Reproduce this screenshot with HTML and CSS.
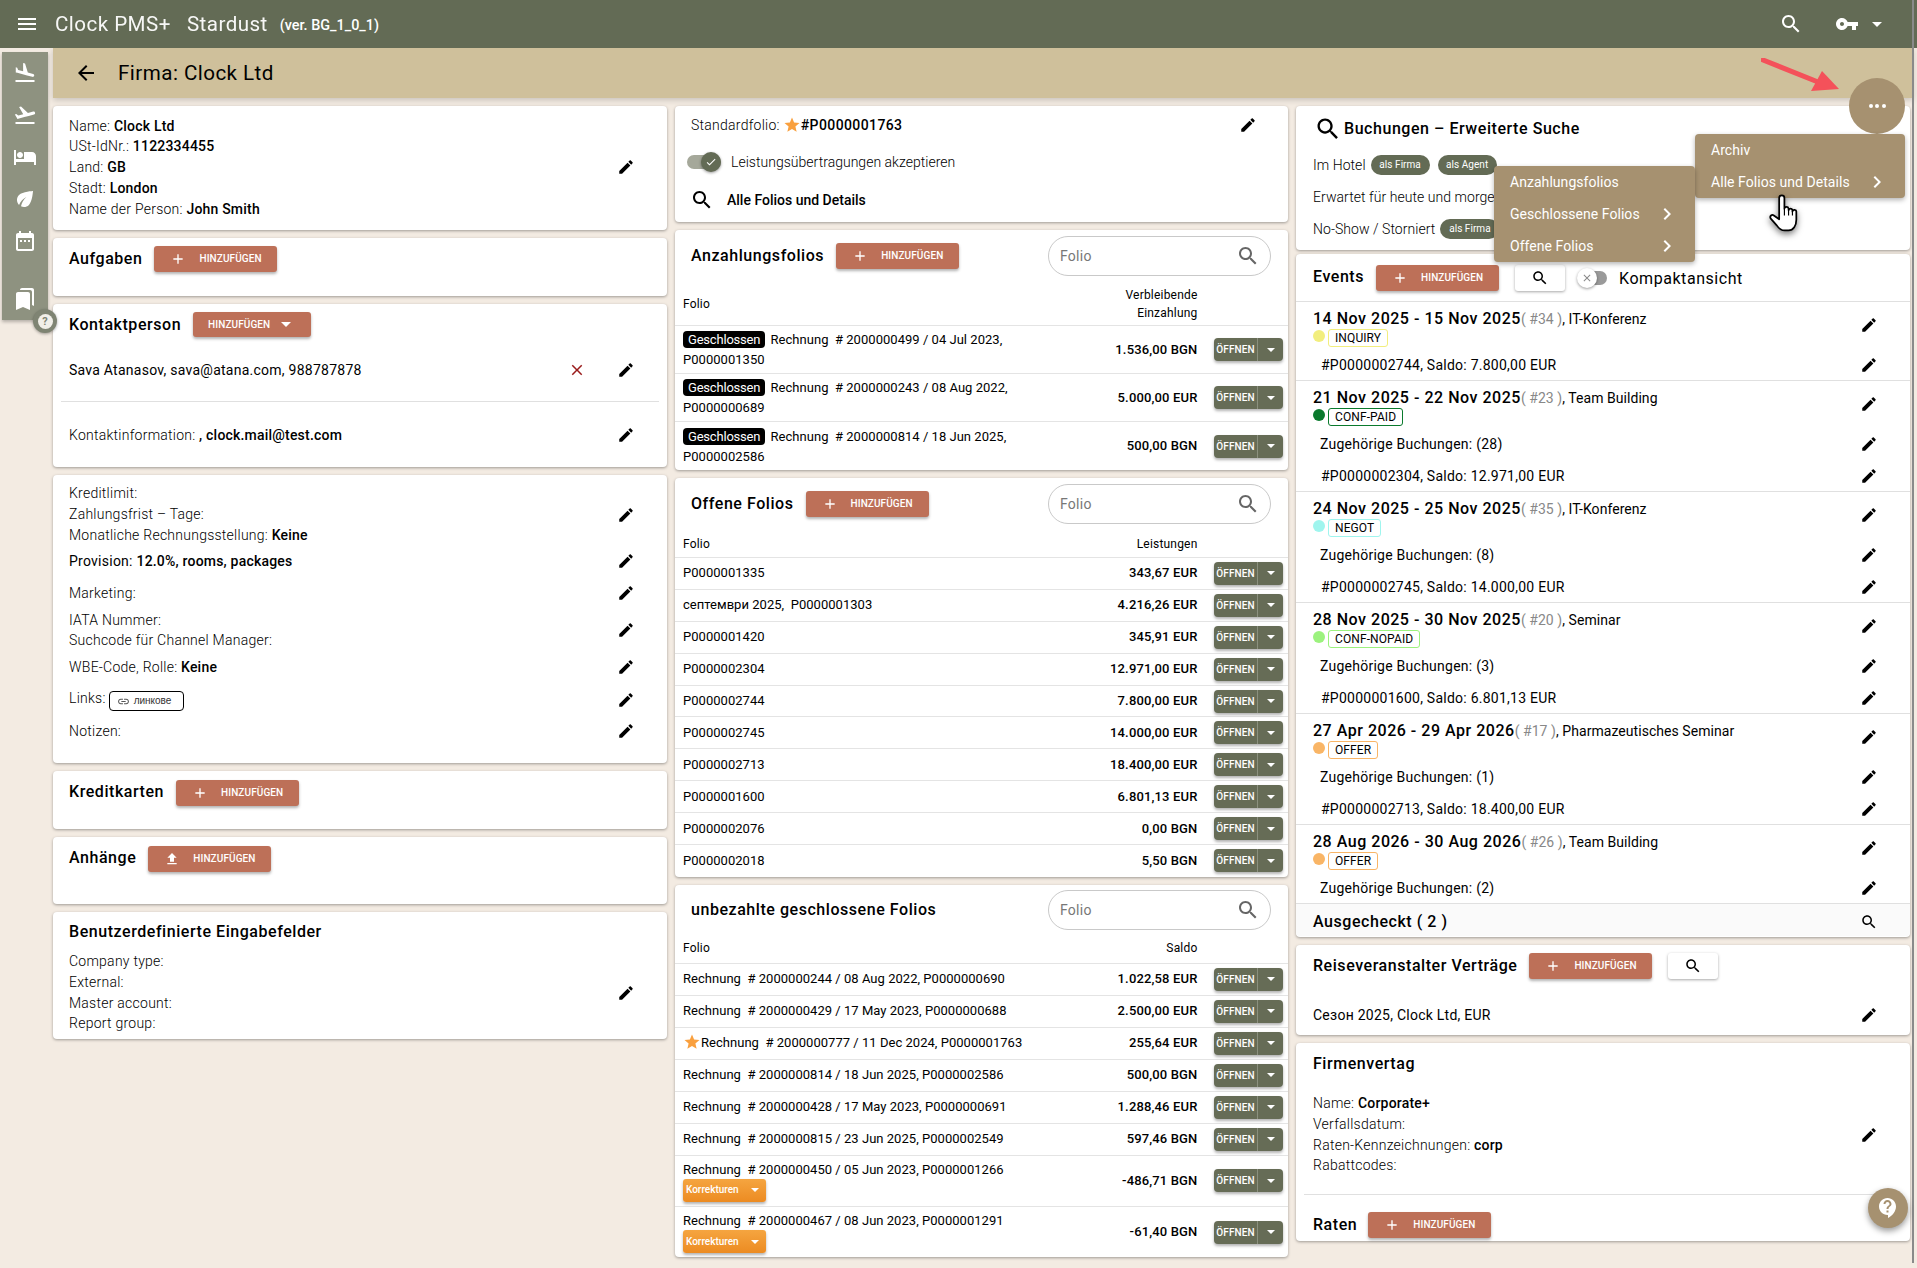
FILE: index.html
```html
<!DOCTYPE html>
<html lang="de">
<head>
<meta charset="utf-8">
<title>Firma: Clock Ltd</title>
<link rel="stylesheet" href="styles.css">
</head>
<body>
<svg class="defs" aria-hidden="true">
<symbol id="i-land" viewBox="0 0 24 24"><path d="M2.5 19h19v2h-19zm7.18-5.73l4.35 1.16 5.31 1.42c.8.21 1.62-.26 1.84-1.06.21-.8-.26-1.62-1.06-1.84l-5.31-1.42-2.76-9.02L10.12 2v8.28L5.15 8.95l-.93-2.32-1.45-.39v5.17l1.6.43 5.31 1.43z"/></symbol>
<symbol id="i-off" viewBox="0 0 24 24"><path d="M2.5 19h19v2h-19zm19.57-9.36c-.21-.8-1.04-1.28-1.84-1.06L14.92 10l-6.9-6.43-1.93.51 4.14 7.17-4.97 1.33-1.97-1.54-1.45.39 1.82 3.16.77 1.33 1.6-.43 5.31-1.42 4.35-1.16L21 11.49c.81-.23 1.28-1.05 1.07-1.85z"/></symbol>
<symbol id="i-hotel" viewBox="0 0 24 24"><path d="M7 13c1.66 0 3-1.34 3-3S8.66 7 7 7s-3 1.34-3 3 1.34 3 3 3zm12-6h-8v7H3V5H1v15h2v-3h18v3h2v-9c0-2.21-1.79-4-4-4z"/></symbol>
<symbol id="i-eco" viewBox="0 0 24 24"><path d="M6.05 8.05c-2.73 2.73-2.73 7.15-.02 9.88 1.47-3.4 4.09-6.24 7.36-7.93-2.77 2.34-4.71 5.61-5.39 9.32 2.6 1.23 5.8.78 7.95-1.37C19.43 14.47 20 4 20 4S9.53 4.57 6.05 8.05z"/></symbol>
<symbol id="i-cal" viewBox="0 0 24 24"><path d="M19 4h-1V2h-2v2H8V2H6v2H5c-1.1 0-2 .9-2 2v14c0 1.1.9 2 2 2h14c1.1 0 2-.9 2-2V6c0-1.1-.9-2-2-2zm0 16H5V9h14v11zM7 11h2v2H7zm4 0h2v2h-2zm4 0h2v2h-2z"/></symbol>
<symbol id="i-books" viewBox="0 0 24 24"><path d="M19 18l2 1V3c0-1.1-.9-2-2-2H8.99C7.89 1 7 1.9 7 3h10c1.1 0 2 .9 2 2v13zM15 5H5c-1.1 0-2 .9-2 2v16l7-3 7 3V7c0-1.1-.9-2-2-2z"/></symbol>
<symbol id="i-search" viewBox="0 0 24 24"><path d="M15.5 14h-.79l-.28-.27C15.41 12.59 16 11.11 16 9.5 16 5.91 13.09 3 9.5 3S3 5.91 3 9.5 5.91 16 9.5 16c1.61 0 3.09-.59 4.23-1.57l.27.28v.79l5 4.99L20.49 19l-4.99-5zm-6 0C7.01 14 5 11.99 5 9.5S7.01 5 9.5 5 14 7.01 14 9.5 11.99 14 9.5 14z"/></symbol>
<symbol id="i-key" viewBox="0 0 24 24"><path d="M12.65 10C11.83 7.67 9.61 6 7 6c-3.31 0-6 2.69-6 6s2.69 6 6 6c2.61 0 4.83-1.67 5.65-4H17v4h4v-4h2v-4H12.65zM7 14c-1.1 0-2-.9-2-2s.9-2 2-2 2 .9 2 2-.9 2-2 2z"/></symbol>
<symbol id="i-add" viewBox="0 0 24 24"><path d="M19 13h-6v6h-2v-6H5v-2h6V5h2v6h6v2z"/></symbol>
<symbol id="i-up" viewBox="0 0 24 24"><path d="M9 16h6v-6h4l-7-7-7 7h4zm-4 2h14v2H5z"/></symbol>
<symbol id="i-back" viewBox="0 0 24 24"><path d="M20 11H7.83l5.59-5.59L12 4l-8 8 8 8 1.41-1.41L7.83 13H20v-2z"/></symbol>
<symbol id="i-menu" viewBox="0 0 24 24"><path d="M3 18h18v-2H3v2zm0-5h18v-2H3v2zm0-7v2h18V6H3z"/></symbol>
<symbol id="i-close" viewBox="0 0 24 24"><path d="M19 6.41L17.59 5 12 10.59 6.41 5 5 6.41 10.59 12 5 17.59 6.41 19 12 13.41 17.59 19 19 17.59 13.41 12z"/></symbol>
<symbol id="i-chev" viewBox="0 0 24 24"><path d="M10 6L8.59 7.41 13.17 12l-4.58 4.59L10 18l6-6z"/></symbol>
<symbol id="i-star" viewBox="0 0 24 24"><path d="M12 17.27L18.18 21l-1.64-7.03L22 9.24l-7.19-.61L12 2 9.19 8.63 2 9.24l5.46 4.73L5.82 21z"/></symbol>
<symbol id="i-link" viewBox="0 0 24 24"><path d="M3.9 12c0-1.71 1.39-3.1 3.1-3.1h4V7H7c-2.76 0-5 2.24-5 5s2.24 5 5 5h4v-1.9H7c-1.71 0-3.1-1.39-3.1-3.1zM8 13h8v-2H8v2zm9-6h-4v1.9h4c1.71 0 3.1 1.39 3.1 3.1s-1.39 3.1-3.1 3.1h-4V17h4c2.76 0 5-2.24 5-5s-2.24-5-5-5z"/></symbol>
<symbol id="i-support" viewBox="0 0 24 24"><path d="M11.5 2C6.81 2 3 5.81 3 10.5S6.81 19 11.5 19h.5v3c4.86-2.34 8-7 8-11.5C20 5.81 16.19 2 11.5 2zm1 14.5h-2v-2h2v2zm0-3.5h-2c0-3.25 3-3 3-5 0-1.1-.9-2-2-2s-2 .9-2 2h-2c0-2.21 1.79-4 4-4s4 1.79 4 4c0 2.5-3 2.75-3 5z"/></symbol>
<symbol id="i-edit" viewBox="0 0 24 24"><path d="M3 17.25V21h3.75L17.81 9.94l-3.75-3.75L3 17.25zM20.71 7.04c.39-.39.39-1.02 0-1.41l-2.34-2.34c-.39-.39-1.02-.39-1.41 0l-1.83 1.83 3.75 3.75 1.83-1.83z"/></symbol>
<symbol id="i-check" viewBox="0 0 24 24"><path d="M9 16.17L4.83 12l-1.42 1.41L9 19 21 7l-1.41-1.41z"/></symbol>
</svg>

<header class="topbar">
  <svg class="ico ico-24 topbar-menu"><use href="#i-menu"/></svg>
  <span class="brand">Clock PMS+</span>
  <span class="brand brand-2">Stardust</span>
  <span class="version">(ver. BG_1_0_1)</span>
  <span class="spacer"></span>
  <svg class="ico ico-24 topbar-search"><use href="#i-search"/></svg>
  <svg class="ico ico-24 topbar-key"><use href="#i-key"/></svg>
  <span class="caret caret-white topbar-caret"></span>
</header>

<nav class="sidebar">
  <svg class="ico side-ico"><use href="#i-land"/></svg>
  <svg class="ico side-ico"><use href="#i-off"/></svg>
  <svg class="ico side-ico"><use href="#i-hotel"/></svg>
  <svg class="ico side-ico"><use href="#i-eco"/></svg>
  <svg class="ico side-ico"><use href="#i-cal"/></svg>
  <span class="side-sep"></span>
  <svg class="ico side-ico side-books"><use href="#i-books"/></svg>
  <span class="side-help"><span class="side-help-in">?</span></span>
</nav>

<div class="subbar">
  <svg class="ico ico-24 subbar-back"><use href="#i-back"/></svg>
  <h1 class="subbar-title">Firma: Clock Ltd</h1>
</div>

<main class="grid">
  <section class="col">
    <div class="card card-info">
      <div class="line-row">
        <div class="lines">
          <div>Name: <b>Clock Ltd</b></div>
          <div>USt-IdNr.: <b>1122334455</b></div>
          <div>Land: <b>GB</b></div>
          <div>Stadt: <b>London</b></div>
          <div>Name der Person: <b>John Smith</b></div>
        </div>
        <svg class="ico edit"><use href="#i-edit"/></svg>
      </div>
    </div>

    <div class="card card-aufgaben">
      <div class="title-row"><h2 class="title">Aufgaben</h2>
        <span class="btn"><svg class="ico btn-ico"><use href="#i-add"/></svg>Hinzufügen</span></div>
    </div>

    <div class="card card-kontakt">
      <div class="title-row"><h2 class="title">Kontaktperson</h2>
        <span class="btn btn-menu">Hinzufügen<span class="caret caret-white"></span></span></div>
      <div class="kontakt-row"><span class="strong-text">Sava Atanasov, sava@atana.com, 988787878</span><span class="spacer"></span>
        <svg class="ico del"><use href="#i-close"/></svg><svg class="ico edit"><use href="#i-edit"/></svg></div>
      <hr class="rule rule-inset">
      <div class="kontakt-row kontakt-row-2"><span>Kontaktinformation: <b>, clock.mail@test.com</b></span><span class="spacer"></span><svg class="ico edit"><use href="#i-edit"/></svg></div>
    </div>

    <div class="card card-kredit">
      <div class="line-row lr-3"><div class="lines"><div>Kreditlimit:</div><div>Zahlungsfrist – Tage:</div><div>Monatliche Rechnungsstellung: <b>Keine</b></div></div><svg class="ico edit"><use href="#i-edit"/></svg></div>
      <div class="line-row lr-prov"><div>Provision: <b>12.0%, rooms, packages</b></div><svg class="ico edit"><use href="#i-edit"/></svg></div>
      <div class="line-row lr-mark"><div>Marketing:</div><svg class="ico edit"><use href="#i-edit"/></svg></div>
      <div class="line-row lr-iata"><div class="lines"><div>IATA Nummer:</div><div>Suchcode für Channel Manager:</div></div><svg class="ico edit"><use href="#i-edit"/></svg></div>
      <div class="line-row lr-wbe"><div>WBE-Code, Rolle: <b>Keine</b></div><svg class="ico edit"><use href="#i-edit"/></svg></div>
      <div class="line-row lr-links"><div class="links">Links: <span class="link-chip"><svg class="ico link-ico"><use href="#i-link"/></svg>линкове</span></div><svg class="ico edit"><use href="#i-edit"/></svg></div>
      <div class="line-row lr-notes"><div>Notizen:</div><svg class="ico edit"><use href="#i-edit"/></svg></div>
    </div>

    <div class="card card-karten">
      <div class="title-row"><h2 class="title">Kreditkarten</h2>
        <span class="btn"><svg class="ico btn-ico"><use href="#i-add"/></svg>Hinzufügen</span></div>
    </div>

    <div class="card card-anhang">
      <div class="title-row"><h2 class="title">Anhänge</h2>
        <span class="btn"><svg class="ico btn-ico"><use href="#i-up"/></svg>Hinzufügen</span></div>
    </div>

    <div class="card card-custom">
      <h2 class="title custom-title">Benutzerdefinierte Eingabefelder</h2>
      <div class="line-row"><div class="lines"><div>Company type:</div><div>External:</div><div>Master account:</div><div>Report group:</div></div><svg class="ico edit"><use href="#i-edit"/></svg></div>
    </div>
  </section>

  <section class="col">
    <div class="card card-std">
      <div class="std-row"><span>Standardfolio: <svg class="ico star"><use href="#i-star"/></svg><b class="std-no">#P0000001763</b></span><span class="spacer"></span><svg class="ico edit"><use href="#i-edit"/></svg></div>
      <div class="toggle-row"><span class="toggle toggle-on"><span class="knob knob-on"><svg class="ico knob-ico"><use href="#i-check"/></svg></span></span><span>Leistungsübertragungen akzeptieren</span></div>
      <div class="alle-row"><svg class="ico ico-24"><use href="#i-search"/></svg><span>Alle Folios und Details</span></div>
    </div>

    <div class="card card-anz">
      <div class="folio-head"><h2 class="title">Anzahlungsfolios</h2>
        <span class="btn"><svg class="ico btn-ico"><use href="#i-add"/></svg>Hinzufügen</span>
        <span class="spacer"></span>
        <div class="field"><span>Folio</span><svg class="ico ico-24"><use href="#i-search"/></svg></div></div>
      <div class="frow frow-th frow-th-2"><span>Folio</span><span class="amt-th">Verbleibende<br>Einzahlung</span></div>
      <div class="frow frow-48"><span class="ftext"><span class="closed">Geschlossen</span> Rechnung &nbsp;# 2000000499 / 04 Jul 2023,<br>P0000001350</span><span class="amt">1.536,00 BGN</span><span class="split"><span class="split-l">Öffnen</span><span class="split-r"><span class="caret caret-white"></span></span></span></div>
      <div class="frow frow-48"><span class="ftext"><span class="closed">Geschlossen</span> Rechnung &nbsp;# 2000000243 / 08 Aug 2022,<br>P0000000689</span><span class="amt">5.000,00 EUR</span><span class="split"><span class="split-l">Öffnen</span><span class="split-r"><span class="caret caret-white"></span></span></span></div>
      <div class="frow frow-48 frow-last"><span class="ftext"><span class="closed">Geschlossen</span> Rechnung &nbsp;# 2000000814 / 18 Jun 2025,<br>P0000002586</span><span class="amt">500,00 BGN</span><span class="split"><span class="split-l">Öffnen</span><span class="split-r"><span class="caret caret-white"></span></span></span></div>
    </div>

    <div class="card card-off">
      <div class="folio-head"><h2 class="title">Offene Folios</h2>
        <span class="btn"><svg class="ico btn-ico"><use href="#i-add"/></svg>Hinzufügen</span>
        <span class="spacer"></span>
        <div class="field"><span>Folio</span><svg class="ico ico-24"><use href="#i-search"/></svg></div></div>
      <div class="frow frow-th"><span>Folio</span><span class="amt-th">Leistungen</span></div>
      <div class="frow"><span class="ftext">P0000001335</span><span class="amt">343,67 EUR</span><span class="split"><span class="split-l">Öffnen</span><span class="split-r"><span class="caret caret-white"></span></span></span></div>
      <div class="frow"><span class="ftext">септември 2025, &nbsp;P0000001303</span><span class="amt">4.216,26 EUR</span><span class="split"><span class="split-l">Öffnen</span><span class="split-r"><span class="caret caret-white"></span></span></span></div>
      <div class="frow"><span class="ftext">P0000001420</span><span class="amt">345,91 EUR</span><span class="split"><span class="split-l">Öffnen</span><span class="split-r"><span class="caret caret-white"></span></span></span></div>
      <div class="frow"><span class="ftext">P0000002304</span><span class="amt">12.971,00 EUR</span><span class="split"><span class="split-l">Öffnen</span><span class="split-r"><span class="caret caret-white"></span></span></span></div>
      <div class="frow"><span class="ftext">P0000002744</span><span class="amt">7.800,00 EUR</span><span class="split"><span class="split-l">Öffnen</span><span class="split-r"><span class="caret caret-white"></span></span></span></div>
      <div class="frow"><span class="ftext">P0000002745</span><span class="amt">14.000,00 EUR</span><span class="split"><span class="split-l">Öffnen</span><span class="split-r"><span class="caret caret-white"></span></span></span></div>
      <div class="frow"><span class="ftext">P0000002713</span><span class="amt">18.400,00 EUR</span><span class="split"><span class="split-l">Öffnen</span><span class="split-r"><span class="caret caret-white"></span></span></span></div>
      <div class="frow"><span class="ftext">P0000001600</span><span class="amt">6.801,13 EUR</span><span class="split"><span class="split-l">Öffnen</span><span class="split-r"><span class="caret caret-white"></span></span></span></div>
      <div class="frow"><span class="ftext">P0000002076</span><span class="amt">0,00 BGN</span><span class="split"><span class="split-l">Öffnen</span><span class="split-r"><span class="caret caret-white"></span></span></span></div>
      <div class="frow frow-last"><span class="ftext">P0000002018</span><span class="amt">5,50 BGN</span><span class="split"><span class="split-l">Öffnen</span><span class="split-r"><span class="caret caret-white"></span></span></span></div>
    </div>

    <div class="card card-unb">
      <div class="folio-head"><h2 class="title">unbezahlte geschlossene Folios</h2>
        <span class="spacer"></span>
        <div class="field"><span>Folio</span><svg class="ico ico-24"><use href="#i-search"/></svg></div></div>
      <div class="frow frow-th"><span>Folio</span><span class="amt-th">Saldo</span></div>
      <div class="frow"><span class="ftext">Rechnung &nbsp;# 2000000244 / 08 Aug 2022, P0000000690</span><span class="amt">1.022,58 EUR</span><span class="split"><span class="split-l">Öffnen</span><span class="split-r"><span class="caret caret-white"></span></span></span></div>
      <div class="frow"><span class="ftext">Rechnung &nbsp;# 2000000429 / 17 May 2023, P0000000688</span><span class="amt">2.500,00 EUR</span><span class="split"><span class="split-l">Öffnen</span><span class="split-r"><span class="caret caret-white"></span></span></span></div>
      <div class="frow"><span class="ftext"><svg class="ico star star-row"><use href="#i-star"/></svg>Rechnung &nbsp;# 2000000777 / 11 Dec 2024, P0000001763</span><span class="amt">255,64 EUR</span><span class="split"><span class="split-l">Öffnen</span><span class="split-r"><span class="caret caret-white"></span></span></span></div>
      <div class="frow"><span class="ftext">Rechnung &nbsp;# 2000000814 / 18 Jun 2025, P0000002586</span><span class="amt">500,00 BGN</span><span class="split"><span class="split-l">Öffnen</span><span class="split-r"><span class="caret caret-white"></span></span></span></div>
      <div class="frow"><span class="ftext">Rechnung &nbsp;# 2000000428 / 17 May 2023, P0000000691</span><span class="amt">1.288,46 EUR</span><span class="split"><span class="split-l">Öffnen</span><span class="split-r"><span class="caret caret-white"></span></span></span></div>
      <div class="frow"><span class="ftext">Rechnung &nbsp;# 2000000815 / 23 Jun 2025, P0000002549</span><span class="amt">597,46 BGN</span><span class="split"><span class="split-l">Öffnen</span><span class="split-r"><span class="caret caret-white"></span></span></span></div>
      <div class="frow frow-51"><span class="ftext">Rechnung &nbsp;# 2000000450 / 05 Jun 2023, P0000001266<br><span class="korr">Korrekturen<span class="caret caret-white"></span></span></span><span class="amt">-486,71 BGN</span><span class="split"><span class="split-l">Öffnen</span><span class="split-r"><span class="caret caret-white"></span></span></span></div>
      <div class="frow frow-51 frow-last"><span class="ftext">Rechnung &nbsp;# 2000000467 / 08 Jun 2023, P0000001291<br><span class="korr">Korrekturen<span class="caret caret-white"></span></span></span><span class="amt">-61,40 BGN</span><span class="split"><span class="split-l">Öffnen</span><span class="split-r"><span class="caret caret-white"></span></span></span></div>
    </div>
  </section>

  <section class="col col-3">
    <div class="card card-such">
      <div class="such-title"><svg class="ico such-ico"><use href="#i-search"/></svg><h2 class="title">Buchungen – Erweiterte Suche</h2></div>
      <div class="such-row"><span>Im Hotel</span><span class="chip">als Firma</span><span class="chip">als Agent</span></div>
      <div class="such-row"><span>Erwartet für heute und morgen</span></div>
      <div class="such-row"><span>No-Show / Storniert</span><span class="chip">als Firma</span></div>
    </div>

    <div class="card card-events">
      <div class="ev-top"><h2 class="title">Events</h2>
        <span class="btn"><svg class="ico btn-ico"><use href="#i-add"/></svg>Hinzufügen</span>
        <span class="btn-white"><svg class="ico ico-16"><use href="#i-search"/></svg></span>
        <span class="toggle toggle-off"><span class="knob knob-off"><svg class="ico knob-ico"><use href="#i-close"/></svg></span></span>
        <span class="compact">Kompaktansicht</span></div>

      <div class="event">
        <div class="ev-head"><div class="ev-text"><div class="ev-line"><b class="ev-date">14 Nov 2025 - 15 Nov 2025</b><span class="ev-no">( #34 )</span>, IT-Konferenz</div><div class="ev-tagline"><span class="dot dot-inq"></span><span class="tag tag-inq">INQUIRY</span></div></div><svg class="ico edit"><use href="#i-edit"/></svg></div>
        <div class="ev-row"><span class="ev-p">#P0000002744, Saldo: 7.800,00 EUR</span><svg class="ico edit"><use href="#i-edit"/></svg></div>
      </div>
      <div class="event">
        <div class="ev-head"><div class="ev-text"><div class="ev-line"><b class="ev-date">21 Nov 2025 - 22 Nov 2025</b><span class="ev-no">( #23 )</span>, Team Building</div><div class="ev-tagline"><span class="dot dot-paid"></span><span class="tag tag-paid">CONF-PAID</span></div></div><svg class="ico edit"><use href="#i-edit"/></svg></div>
        <div class="ev-row"><span>Zugehörige Buchungen: (28)</span><svg class="ico edit"><use href="#i-edit"/></svg></div>
        <div class="ev-row"><span class="ev-p">#P0000002304, Saldo: 12.971,00 EUR</span><svg class="ico edit"><use href="#i-edit"/></svg></div>
      </div>
      <div class="event">
        <div class="ev-head"><div class="ev-text"><div class="ev-line"><b class="ev-date">24 Nov 2025 - 25 Nov 2025</b><span class="ev-no">( #35 )</span>, IT-Konferenz</div><div class="ev-tagline"><span class="dot dot-neg"></span><span class="tag tag-neg">NEGOT</span></div></div><svg class="ico edit"><use href="#i-edit"/></svg></div>
        <div class="ev-row"><span>Zugehörige Buchungen: (8)</span><svg class="ico edit"><use href="#i-edit"/></svg></div>
        <div class="ev-row"><span class="ev-p">#P0000002745, Saldo: 14.000,00 EUR</span><svg class="ico edit"><use href="#i-edit"/></svg></div>
      </div>
      <div class="event">
        <div class="ev-head"><div class="ev-text"><div class="ev-line"><b class="ev-date">28 Nov 2025 - 30 Nov 2025</b><span class="ev-no">( #20 )</span>, Seminar</div><div class="ev-tagline"><span class="dot dot-nop"></span><span class="tag tag-nop">CONF-NOPAID</span></div></div><svg class="ico edit"><use href="#i-edit"/></svg></div>
        <div class="ev-row"><span>Zugehörige Buchungen: (3)</span><svg class="ico edit"><use href="#i-edit"/></svg></div>
        <div class="ev-row"><span class="ev-p">#P0000001600, Saldo: 6.801,13 EUR</span><svg class="ico edit"><use href="#i-edit"/></svg></div>
      </div>
      <div class="event">
        <div class="ev-head"><div class="ev-text"><div class="ev-line"><b class="ev-date">27 Apr 2026 - 29 Apr 2026</b><span class="ev-no">( #17 )</span>, Pharmazeutisches Seminar</div><div class="ev-tagline"><span class="dot dot-off"></span><span class="tag tag-off">OFFER</span></div></div><svg class="ico edit"><use href="#i-edit"/></svg></div>
        <div class="ev-row"><span>Zugehörige Buchungen: (1)</span><svg class="ico edit"><use href="#i-edit"/></svg></div>
        <div class="ev-row"><span class="ev-p">#P0000002713, Saldo: 18.400,00 EUR</span><svg class="ico edit"><use href="#i-edit"/></svg></div>
      </div>
      <div class="event">
        <div class="ev-head"><div class="ev-text"><div class="ev-line"><b class="ev-date">28 Aug 2026 - 30 Aug 2026</b><span class="ev-no">( #26 )</span>, Team Building</div><div class="ev-tagline"><span class="dot dot-off"></span><span class="tag tag-off">OFFER</span></div></div><svg class="ico edit"><use href="#i-edit"/></svg></div>
        <div class="ev-row"><span>Zugehörige Buchungen: (2)</span><svg class="ico edit"><use href="#i-edit"/></svg></div>
      </div>
      <div class="ausg"><h2 class="title">Ausgecheckt ( 2 )</h2><svg class="ico ico-16 ausg-ico"><use href="#i-search"/></svg></div>
    </div>

    <div class="card card-reise">
      <div class="title-row"><h2 class="title">Reiseveranstalter Verträge</h2>
        <span class="btn"><svg class="ico btn-ico"><use href="#i-add"/></svg>Hinzufügen</span>
        <span class="btn-white"><svg class="ico ico-16"><use href="#i-search"/></svg></span></div>
      <div class="reise-row"><span>Сезон 2025, Clock Ltd, EUR</span><svg class="ico edit"><use href="#i-edit"/></svg></div>
    </div>

    <div class="card card-firm">
      <h2 class="title firm-title">Firmenvertag</h2>
      <div class="line-row firm-lines"><div class="lines"><div>Name: <b>Corporate+</b></div><div>Verfallsdatum:</div><div>Raten-Kennzeichnungen: <b>corp</b></div><div>Rabattcodes:</div></div><svg class="ico edit"><use href="#i-edit"/></svg></div>
      <hr class="rule rule-firm">
      <div class="raten"><h2 class="title">Raten</h2><span class="btn"><svg class="ico btn-ico"><use href="#i-add"/></svg>Hinzufügen</span></div>
    </div>
  </section>
</main>

<div class="scrollline"></div>

<svg class="arrow" viewBox="0 0 80 34"><path d="M2 2 L62 26" stroke="#f4515a" stroke-width="5" stroke-linecap="round" fill="none"/><path d="M78 31 L50 33 L61 13z" fill="#f4515a"/></svg>

<div class="fab"><span class="fab-dots"><i></i><i></i><i></i></span></div>
<div class="menu menu-1">
  <div class="menu-item">Archiv</div>
  <div class="menu-item">Alle Folios und Details<svg class="ico menu-chev"><use href="#i-chev"/></svg></div>
</div>
<div class="menu menu-2">
  <div class="menu-item">Anzahlungsfolios</div>
  <div class="menu-item">Geschlossene Folios<svg class="ico menu-chev"><use href="#i-chev"/></svg></div>
  <div class="menu-item">Offene Folios<svg class="ico menu-chev"><use href="#i-chev"/></svg></div>
</div>
<svg class="hand" viewBox="0 0 32 40"><path d="M10.5 4a2.7 2.7 0 0 1 5.4 0v11a2.2 2.2 0 0 1 4.3 0v1.5a2.1 2.1 0 0 1 4 0v1.5a2 2 0 0 1 4 .5v8c0 6-3 11-8 11h-4c-4 0-6-2-8-5L1.6 25c-1.2-2.4 1.4-4.4 3.4-3l5.5 4z" fill="#fff" stroke="#000" stroke-width="1.8" stroke-linejoin="round"/><path d="M15.9 15v7M20.2 16.5V22M24.2 18v4" stroke="#000" stroke-width="1.2" fill="none"/></svg>
<div class="fab-help"><svg class="ico fab-help-ico"><use href="#i-support"/></svg></div>
</body>
</html>
```
FILE: styles.css
```css
* { box-sizing: border-box; }
html, body { margin: 0; padding: 0; }
body {
  width: 1917px; height: 1268px; overflow: hidden; position: relative;
  background: #f3ebe2; font-family: Roboto, "Noto Sans", sans-serif;
  font-size: 14px; line-height: 20px; color: #000; letter-spacing: .25px; font-weight: 300;
}
b { font-weight: 500; letter-spacing: .2px; }
h1, h2 { margin: 0; font-weight: 500; }
.defs { position: absolute; width: 0; height: 0; }
.ico { width: 18px; height: 18px; fill: currentColor; flex: none; display: block; }
.ico-24 { width: 24px; height: 24px; }
.ico-16 { width: 18px; height: 18px; }
.spacer { flex: 1; }

/* top */
.topbar { height: 48px; background: #636b55; color: #fff; display: flex; align-items: center; padding-left: 15px; position: relative; z-index: 3; font-weight: 400; }
.topbar-menu { width: 24px; height: 24px; margin-right: 16px; }
.brand { font-size: 20.6px; letter-spacing: .45px; margin-right: 16px; opacity: .95; }
.version { font-size: 14.4px; font-weight: 500; margin-left: -4px; margin-top: 4px; letter-spacing: 0; }
.topbar-search { margin-right: 32px; }
.topbar-key { margin-right: 13px; }
.topbar-caret { margin-right: 35px; }
.caret { display: inline-block; width: 0; height: 0; border-left: 5px solid transparent; border-right: 5px solid transparent; border-top: 5px solid #fff; }
.split .caret, .korr .caret { border-left-width: 4px; border-right-width: 4px; border-top-width: 4px; }

.sidebar { position: absolute; left: 2px; top: 52px; width: 46px; height: 268px; background: #8e9280; color: #fff; display: flex; flex-direction: column; align-items: center; padding-top: 9px; z-index: 2; box-shadow: 0 2px 3px rgba(0,0,0,.25); }
.side-ico { width: 24px; height: 24px; margin-bottom: 18px; }
.side-sep { width: 14px; height: 1px; background: #a9ab9c; margin-top: -1px; margin-bottom: 17px; }
.side-help { position: absolute; left: 31px; top: 257px; width: 24px; height: 24px; border-radius: 50%; background: #7f8473; display: flex; align-items: center; justify-content: center; box-shadow: 0 1px 3px rgba(0,0,0,.35); }
.side-help-in { width: 15px; height: 15px; border-radius: 50%; background: #f1efe9; color: #7f8473; display: flex; align-items: center; justify-content: center; font-weight: 700; font-size: 11px; line-height: 15px; letter-spacing: 0; }

.subbar { height: 50px; margin-left: 53px; margin-right: 4px; background: #cfc09b; display: flex; align-items: center; padding-left: 21px; box-shadow: 0 2px 6px rgba(0,0,0,.18); position: relative; z-index: 1; }
.subbar-back { margin-right: 20px; }
.subbar-title { font-size: 20.6px; font-weight: 400; letter-spacing: .45px; }

.grid { display: grid; grid-template-columns: 614px 613px 614px; column-gap: 8px; margin-left: 53px; padding-top: 8px; align-items: start; }
.col { display: flex; flex-direction: column; gap: 8px; }
.card { background: #fff; border-radius: 4px; box-shadow: 0 1px 3px rgba(0,0,0,.35); position: relative; }

.title { font-size: 16px; line-height: 22px; letter-spacing: .55px; font-weight: 500; white-space: nowrap; }
.title-row { display: flex; align-items: flex-start; padding: 8px 0 0 16px; gap: 12px; }
.title-row .title { margin-top: 2px; }

.btn { display: inline-flex; align-items: center; height: 26px; width: 123px; padding-left: 16px; gap: 13px; border-radius: 3px; background: #bd7058; color: #fff; font-size: 10px; font-weight: 500; text-transform: uppercase; letter-spacing: .1px; box-shadow: 0 2px 3px rgba(0,0,0,.3); flex: none; }
.btn-ico { width: 16px; height: 16px; }
.btn-menu { width: 118px; height: 25px; padding-left: 15px; gap: 11px; margin-left: 0; }
.btn-white { display: inline-flex; align-items: center; justify-content: center; width: 50px; height: 26px; background: #fff; border-radius: 3px; box-shadow: 0 1px 3px rgba(0,0,0,.35); flex: none; }

.edit { color: #000; }
.line-row { display: flex; justify-content: space-between; align-items: center; padding: 0 32px 0 16px; }
.lines { line-height: 20.75px; }

.card-info { height: 124px; padding-top: 9.5px; }
.card-aufgaben { height: 58px; }
.card-kontakt { height: 163px; }
.kontakt-row { display: flex; align-items: center; padding: 0 32px 0 16px; height: 20px; margin-top: 23px; }
.strong-text { font-weight: 400; }
.del { margin-right: 31px; color: #9a1c1c; }
.rule { border: 0; border-top: 1px solid #e0e0e0; margin: 0; }
.rule-inset { margin: 21px 8px 0; }
.kontakt-row-2 { margin-top: 23px; }

.card-kredit { height: 288px; padding-top: 8px; }
.lr-3 .lines { line-height: 21px; }
.lr-prov { margin-top: 5px; font-weight: 400; height: 20px; }
.lr-mark { margin-top: 12px; height: 20px; }
.lr-iata { margin-top: 7px; }
.lr-iata .lines { line-height: 20px; }
.lr-wbe { margin-top: 7px; height: 20px; }
.links { display: flex; align-items: flex-start; gap: 3px; }
.lr-links { margin-top: 12px; height: 21px; }
.link-chip { display: inline-flex; align-items: center; height: 20px; width: 75px; margin-top: 3px; padding-left: 7px; gap: 4px; border: 1px solid #000; border-radius: 4px; font-size: 10px; font-family: "Liberation Sans", sans-serif; color: #333; font-weight: 400; letter-spacing: 0; }
.link-ico { width: 13px; height: 13px; color: #555; }
.lr-notes { margin-top: 11px; height: 20px; }
.card-karten { height: 58px; }
.card-karten .title-row { padding-top: 9px; }
.card-karten .title { margin-top: 1px; }
.card-anhang { height: 67px; }
.card-anhang .title-row { padding-top: 9px; gap: 12px; }
.card-anhang .title { margin-top: 1px; }
.card-custom { height: 127px; }
.custom-title { padding: 9px 16px 8px; }
.card-custom .lines { line-height: 20.75px; }

/* col 2 */
.card-std { height: 116px; }
.std-row { display: flex; align-items: center; padding: 9px 31px 0 16px; height: 29px; }
.std-row > span:first-child { display: flex; align-items: center; gap: 3px; }
.std-no { font-weight: 500; font-size: 14px; letter-spacing: .4px; }
.star { color: #f9a03f; width: 18px; height: 18px; }
.std-row .star { margin-right: -3px; }
.toggle-row { display: flex; align-items: center; gap: 10px; padding: 17px 0 0 12px; font-weight: 300; letter-spacing: .02px; }
.toggle { display: inline-block; width: 34px; height: 14px; border-radius: 7px; position: relative; flex: none; }
.toggle-on { background: #a5a89a; }
.toggle-off { background: #9a9a9a; width: 26px; margin-left: 4px; margin-right: 0; }
.knob { position: absolute; top: -3px; width: 20px; height: 20px; border-radius: 50%; display: flex; align-items: center; justify-content: center; box-shadow: 0 1px 3px rgba(0,0,0,.4); }
.knob-on { right: 0; background: #636b55; color: #fff; }
.knob-off { left: -4px; background: #fff; color: #888; }
.knob-ico { width: 12px; height: 12px; }
.alle-row { display: flex; align-items: center; gap: 13px; padding: 16px 0 0 15px; font-weight: 500; letter-spacing: 0; }

.folio-head { display: flex; align-items: center; height: 46px; padding: 6px 17px 0 16px; gap: 12px; }
.field { width: 223px; height: 40px; border: 1px solid #c9c9c9; border-radius: 20px; display: flex; align-items: center; justify-content: space-between; padding: 0 10px 0 11px; color: #777; font-weight: 400; font-size: 14px; flex: none; }
.field .ico { color: #666; }
.frow { display: flex; align-items: center; height: 32px; padding: 0 5px 0 8px; border-bottom: 1px solid #e4e4e4; font-size: 13px; font-weight: 400; }
.frow-last { border-bottom: 0; }
.frow-48 { height: 48px; }
.frow-51 { height: 51px; }
.frow-th { height: 33px; font-weight: 400; font-size: 12px; letter-spacing: .2px; }
.frow-th-2 { height: 50px; line-height: 18px; padding-top: 6px; }
.card-off .frow { height: 31.9px; }
.card-off .frow-th { height: 34px; padding-top: 6px; }
.card-unb .frow-th { padding-top: 3px; }
.card-unb .frow { padding-bottom: 1px; }
.card-unb .folio-head { padding-top: 4px; }
.ftext { flex: 1; line-height: 20px; letter-spacing: .03px; }
.frow-48 .ftext { padding-top: 1px; }
.amt { font-weight: 500; margin-right: 16.5px; font-size: 13px; letter-spacing: .15px; }
.amt-th { flex: 1; text-align: right; margin-right: 85.5px; }
.split { display: inline-flex; width: 69px; height: 23px; background: #666c56; color: #fff; border-radius: 4px; box-shadow: 0 2px 3px rgba(0,0,0,.3); flex: none; font-size: 10px; font-weight: 500; text-transform: uppercase; line-height: 23px; letter-spacing: .1px; }
.split-l { width: 44px; text-align: center; border-right: 1px solid #8b907e; }
.split-r { flex: 1; display: flex; align-items: center; justify-content: center; }
.closed { display: inline-block; background: #000; color: #fff; border-radius: 4px; padding: 0 5px; line-height: 17px; margin-right: 2px; letter-spacing: -.2px; }
.star-row { display: inline-block; vertical-align: -4px; margin-right: 0; }
.korr { display: inline-flex; align-items: center; justify-content: space-between; width: 83px; height: 23px; padding: 0 7px 0 3px; background: linear-gradient(#f5a540, #ec8b22); color: #fff; font-size: 10px; font-weight: 500; border-radius: 3px; box-shadow: 0 2px 3px rgba(0,0,0,.3); vertical-align: top; margin-top: -1px; letter-spacing: 0; }
.card-anz { height: 240px; }
.card-off { height: 399px; }
.card-unb { height: 372px; }

/* col 3 */
.col-3 { gap: 0; }
.card-such { height: 144px; margin-bottom: 4px; padding: 11px 0 0 17px; }
.such-title { display: flex; align-items: center; gap: 2px; margin-left: 0; height: 24px; }
.such-ico { width: 28px; height: 28px; color: #000; margin-left: 1px; }
.such-row { display: flex; align-items: center; gap: 5px; height: 32px; font-weight: 300; white-space: nowrap; letter-spacing: .05px; }
.such-title + .such-row { margin-top: 8px; }
.chip { background: #636b55; color: #fff; height: 20px; width: 59px; border-radius: 10px; display: flex; align-items: center; justify-content: center; font-size: 10px; font-weight: 400; }
.chip + .chip { margin-left: 3px; }
.card-events { height: 683px; margin-bottom: 8px; }
.ev-top { display: flex; align-items: center; height: 48px; padding-left: 17px; border-bottom: 1px solid #e0e0e0; gap: 12px; }
.ev-top .title { margin-top: -1px; }
.ev-top .btn-white { margin-left: 4px; }
.compact { font-size: 16px; font-weight: 400; letter-spacing: .55px; margin-top: 2px; }
.event { border-bottom: 1px solid #e0e0e0; }
.ev-head { display: flex; justify-content: space-between; align-items: center; height: 46px; padding: 5px 32px 0 17px; }
.ev-head .edit { margin-top: -5px; }
.ev-line { font-weight: 400; line-height: 20px; white-space: nowrap; letter-spacing: .05px; }
.ev-date { font-size: 16px; font-weight: 500; letter-spacing: .52px; }
.ev-no { color: #888; font-weight: 400; }
.ev-tagline { display: flex; align-items: center; gap: 3px; }
.dot { width: 12px; height: 12px; border-radius: 50%; margin-top: -3px; }
.tag { display: block; font-size: 12px; line-height: 16px; height: 18px; border: 1px solid; border-radius: 3px; padding: 0 6px; font-weight: 400; letter-spacing: .1px; }
.dot-inq { background: #f2ee7e; } .tag-inq { border-color: #f2ee7e; }
.dot-paid { background: #0a7a2d; } .tag-paid { border-color: #0a7a2d; }
.dot-neg { background: #9ff5ee; } .tag-neg { border-color: #9ff5ee; }
.dot-nop { background: #9cf27e; } .tag-nop { border-color: #9cf27e; }
.dot-off { background: #f9b566; } .tag-off { border-color: #f9b566; }
.ev-row { display: flex; justify-content: space-between; align-items: center; height: 32px; padding: 2px 32px 0 24px; font-weight: 400; }
.ev-p { padding-left: 1px; }
.ausg { display: flex; justify-content: space-between; align-items: center; height: 32px; background: #fafafa; padding: 3px 32px 0 17px; border-radius: 0 0 4px 4px; }
.card-reise { height: 90px; margin-bottom: 8px; }
.card-reise .title-row { padding: 8px 0 0 17px; }
.card-reise .btn-white { margin-left: 4px; }
.reise-row { display: flex; justify-content: space-between; align-items: center; height: 32px; padding: 0 32px 0 17px; margin-top: 20px; font-weight: 400; }
.card-firm { height: 198px; }
.firm-title { padding: 10px 17px 0; }
.firm-lines { padding-left: 17px; margin-top: 18px; }
.rule-firm { margin: 18px 8px 0; }
.raten { display: flex; align-items: center; gap: 11px; padding: 17px 0 0 17px; }

/* over content */
.scrollline { position: absolute; left: 1912px; top: 0; width: 2px; height: 1263px; background: #8a8a8a; z-index: 4; }
.arrow { position: absolute; left: 1761px; top: 58px; width: 80px; height: 34px; z-index: 6; }
.fab { position: absolute; left: 1849px; top: 78px; width: 56px; height: 56px; border-radius: 50%; background: #a69170; z-index: 6; display: flex; align-items: center; justify-content: center; }
.fab-dots { display: flex; gap: 2.5px; }
.fab-dots i { width: 4px; height: 4px; border-radius: 50%; background: #fff; }
.menu { position: absolute; background: #a69170; color: #fff; border-radius: 4px; z-index: 6; box-shadow: 0 2px 5px rgba(0,0,0,.3); font-weight: 400; letter-spacing: .05px; }
.menu-1 { left: 1695px; top: 134px; width: 210px; }
.menu-2 { left: 1494px; top: 166px; width: 201px; }
.menu-item { height: 32px; display: flex; align-items: center; justify-content: space-between; padding: 0 16px 0 16px; }
.menu-chev { width: 24px; height: 24px; }
.hand { position: absolute; left: 1769px; top: 194px; width: 31px; height: 39px; z-index: 7; filter: drop-shadow(0 3px 3px rgba(0,0,0,.5)); }
.fab-help { position: absolute; left: 1868px; top: 1188px; width: 40px; height: 40px; border-radius: 50%; background: #a69170; color: #fff; z-index: 6; display: flex; align-items: center; justify-content: center; box-shadow: 0 3px 6px rgba(0,0,0,.4); }
.fab-help-ico { width: 24px; height: 24px; }
```
